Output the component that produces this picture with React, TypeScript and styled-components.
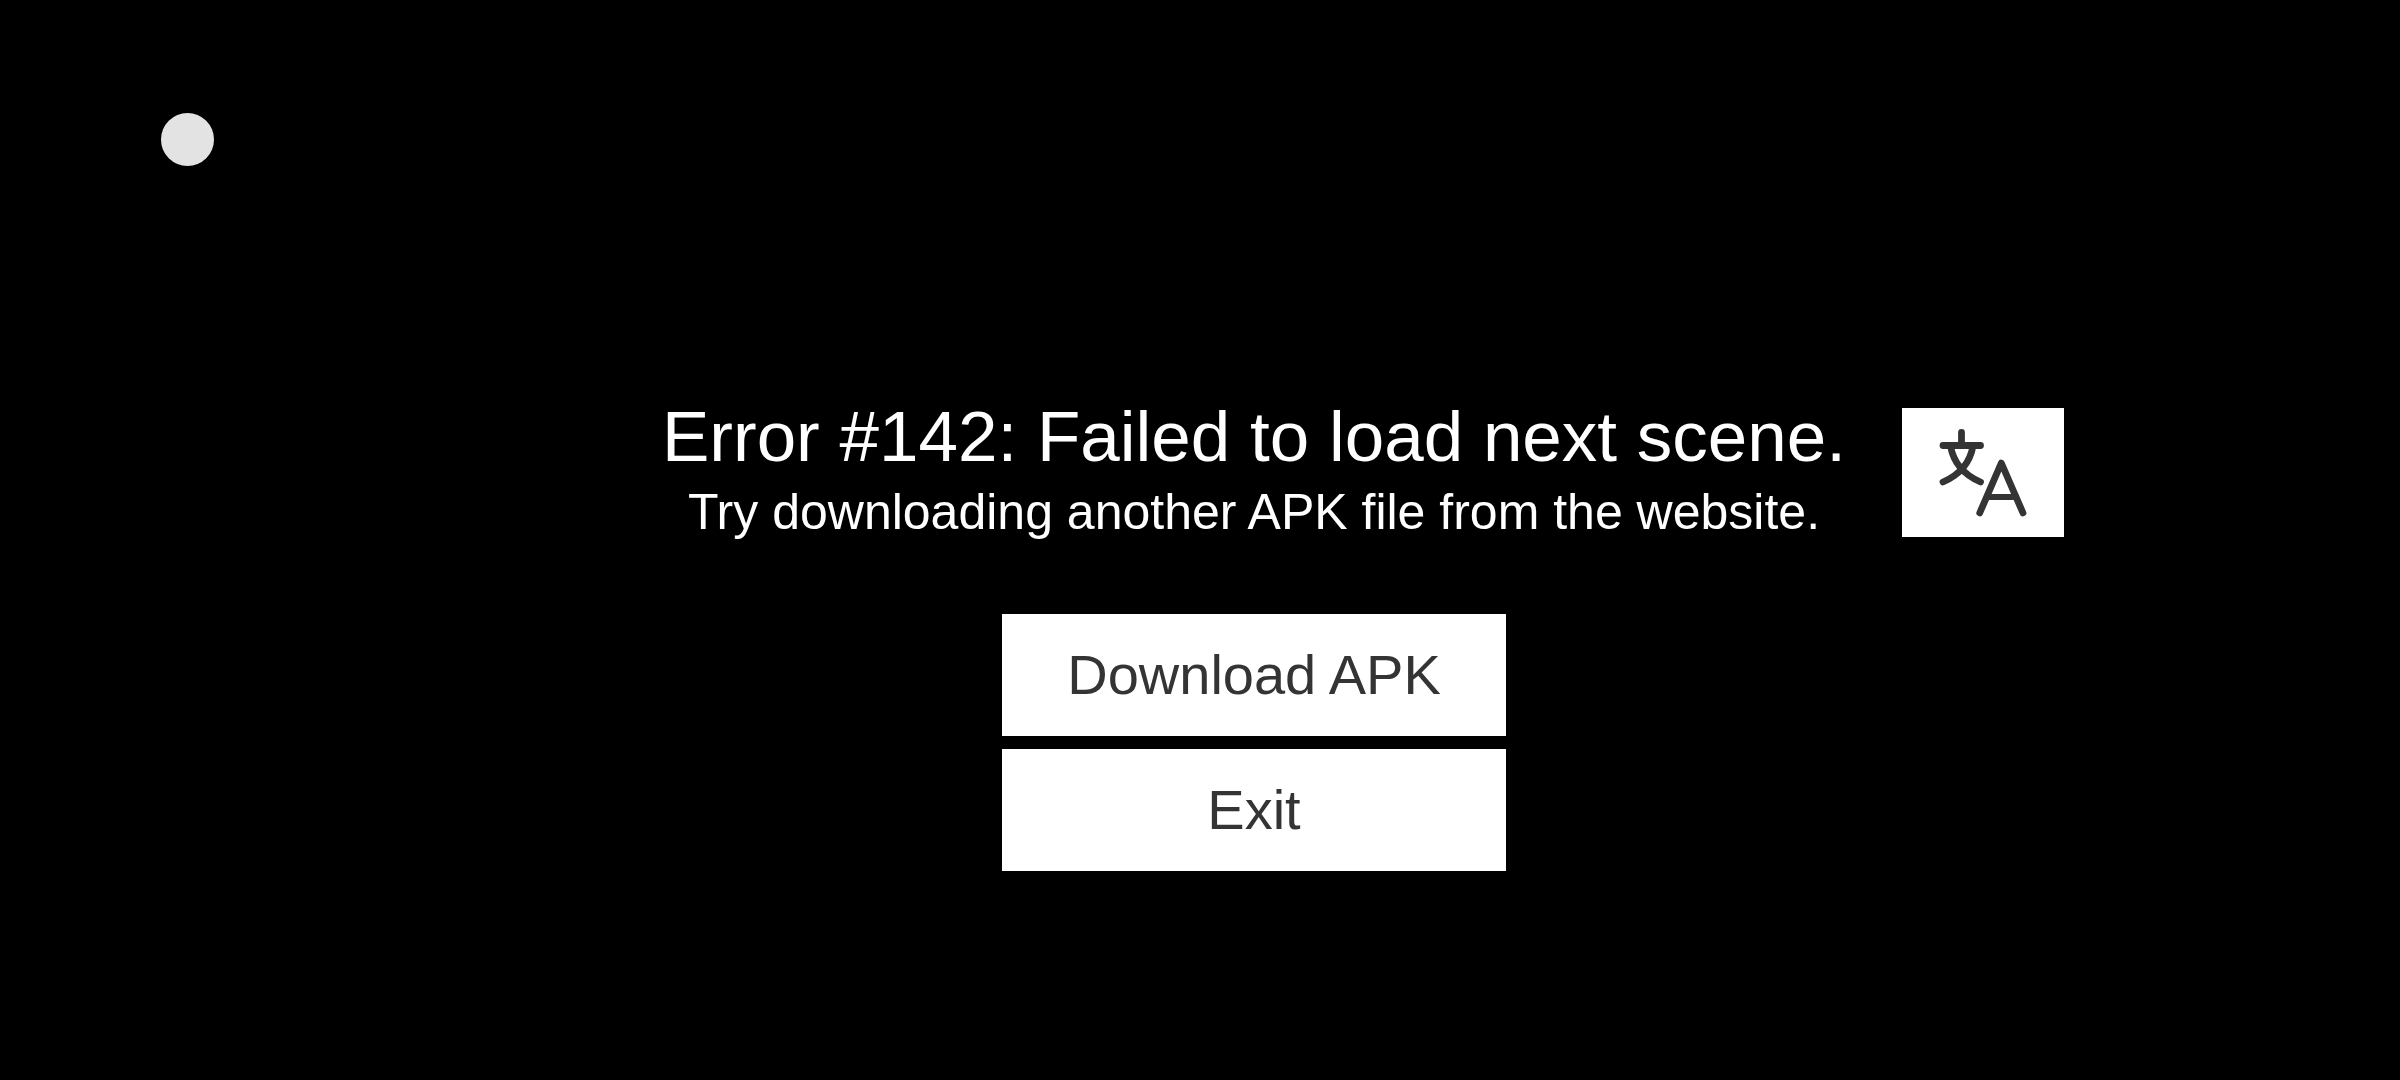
import React from "react";
import styled, { createGlobalStyle } from "styled-components";

const GlobalStyle = createGlobalStyle`
  *, *::before, *::after {
    box-sizing: border-box;
  }
  body {
    margin: 0;
    background: #000;
    font-family: "Liberation Sans", Arial, sans-serif;
  }
`;

const Screen = styled.div`
  min-height: 100vh;
  background: #000;
  color: #fff;
`;

const StatusBar = styled.header`
  display: flex;
  padding: 113px 161px 0;
`;

const StatusDot = styled.span`
  width: 53px;
  height: 53px;
  border-radius: 50%;
  background: #e3e3e3;
`;

const Content = styled.main`
  display: flex;
  flex-direction: column;
  gap: 65px;
  padding: 230px 0 64px 108px;
`;

const MessageRow = styled.section`
  display: grid;
  grid-template-columns: 1fr auto 1fr;
  align-items: center;
  column-gap: 56px;
`;

const Message = styled.div`
  grid-column: 2;
  padding-bottom: 3px;
  text-align: center;
`;

const Title = styled.h1`
  margin: 0;
  font-size: 71px;
  font-weight: 400;
  line-height: 82px;
`;

const Hint = styled.p`
  margin: 0;
  font-size: 50px;
  line-height: 68px;
`;

const Button = styled.button`
  display: flex;
  align-items: center;
  justify-content: center;
  padding: 0;
  border: 0;
  border-radius: 0;
  background: #fff;
  color: #343434;
  font-family: inherit;
  font-size: 56px;
  line-height: 64px;
  cursor: pointer;
`;

const LanguageButton = styled(Button)`
  width: 162px;
  height: 129px;
`;

const Actions = styled.div`
  display: flex;
  flex-direction: column;
  align-self: center;
  gap: 13px;
  width: 504px;
`;

const ActionButton = styled(Button)`
  height: 122px;
`;

function TranslateIcon() {
  return (
    <svg
      width="90"
      height="90"
      viewBox="0 0 90 90"
      fill="none"
      stroke="currentColor"
      strokeWidth="6.8"
      strokeLinecap="round"
      strokeLinejoin="round"
      aria-hidden="true"
    >
      <path d="M23.500 4.500V17" />
      <path d="M5 17.500H42.500" />
      <path d="M12.500 18C15 32 24 46 42.500 54" />
      <path d="M35 18C32.500 32 23.500 46 5 54" />
      <path d="M41.700 85L63.300 35L85 85" />
      <path d="M49 69H78" strokeWidth="6" />
    </svg>
  );
}

export default function App() {
  return (
    <>
      <GlobalStyle />
      <Screen>
        <StatusBar>
          <StatusDot />
        </StatusBar>
        <Content>
          <MessageRow>
            <Message>
              <Title>Error #142: Failed to load next scene.</Title>
              <Hint>Try downloading another APK file from the website.</Hint>
            </Message>
            <LanguageButton type="button" aria-label="Change language">
              <TranslateIcon />
            </LanguageButton>
          </MessageRow>
          <Actions>
            <ActionButton type="button">Download APK</ActionButton>
            <ActionButton type="button">Exit</ActionButton>
          </Actions>
        </Content>
      </Screen>
    </>
  );
}
